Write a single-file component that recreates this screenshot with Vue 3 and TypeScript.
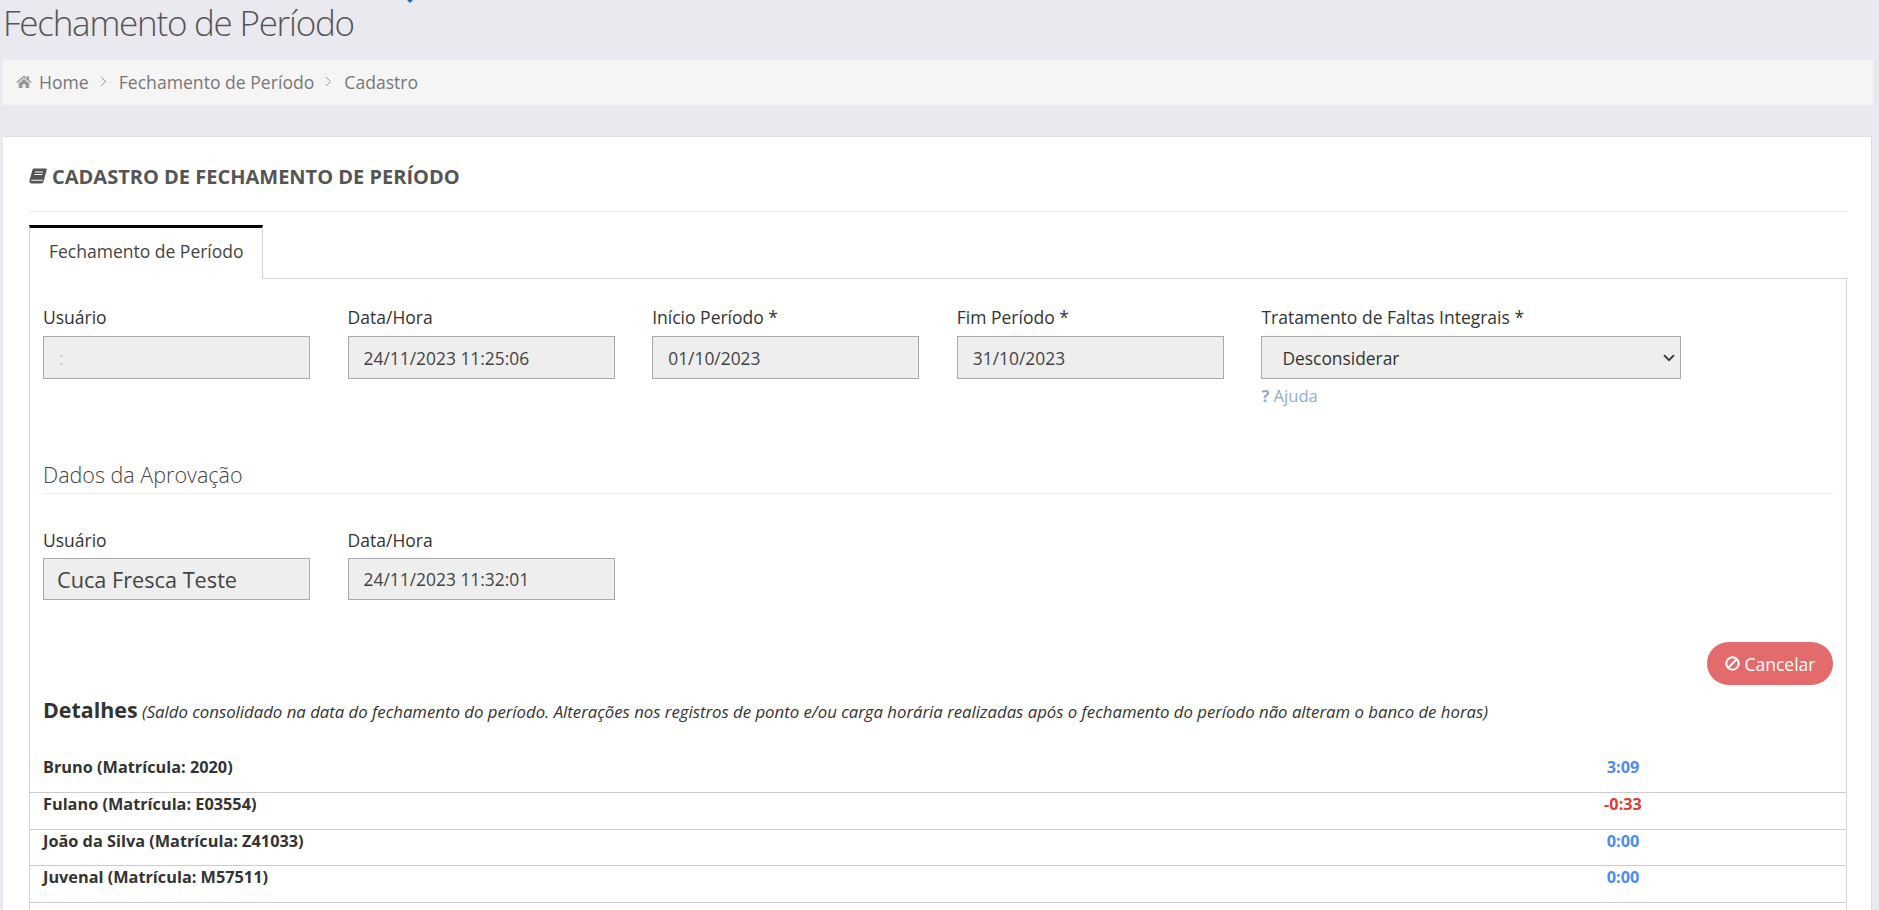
<script setup lang="ts">
interface Row { name: string; value: string; negative?: boolean }
const rows: Row[] = [
  { name: 'Bruno (Matrícula: 2020)', value: '3:09' },
  { name: 'Fulano (Matrícula: E03554)', value: '-0:33', negative: true },
  { name: 'João da Silva (Matrícula: Z41033)', value: '0:00' },
  { name: 'Juvenal (Matrícula: M57511)', value: '0:00' },
]
</script>

<template>
  <div class="page">
    <svg class="tip" width="10" height="3" viewBox="0 0 10 3"><path d="M2 0h6L5 3z" fill="#1f6fa8" /></svg>
    <h1 class="title">Fechamento de Período</h1>
    <nav class="crumbs">
      <svg class="home" width="16" height="13" viewBox="0 0 16 13"><path d="M8 .6.300 7l.9 1L8 2.400 14.800 8l.9-1-2.700-2.300V1.200h-1.900v1.900zM2.700 8.200V13h3.800V9.300h3V13h3.800V8.200L8 3.800z" fill="#999" /></svg>
      <span>Home</span>
      <svg class="sep" width="7" height="11" viewBox="0 0 7 11"><path d="m1 1 4.500 4.500L1 10" fill="none" stroke="#999" stroke-width="1" /></svg>
      <span>Fechamento de Período</span>
      <svg class="sep" width="7" height="11" viewBox="0 0 7 11"><path d="m1 1 4.500 4.500L1 10" fill="none" stroke="#999" stroke-width="1" /></svg>
      <span>Cadastro</span>
    </nav>
    <main class="panel">
      <header class="heading">
        <svg width="18" height="16" viewBox="0 0 18 16"><path d="M5 .5h11.800c.7 0 1.100.5.900 1.200l-2.900 11c-.3 1.500-1.300 2.800-3 2.800H3C1.200 15.500 0 14.200.500 12.200L3.500 1.800C3.700 1 4.200.5 5 .5z" fill="#555" /><path d="M2.300 12.300h11.500M6 4h8M5.400 6.500h8" stroke="#fff" stroke-width="1.100" /></svg>
        <h2>CADASTRO DE FECHAMENTO DE PERÍODO</h2>
      </header>
      <div class="tabs"><div class="tab">Fechamento de Período</div></div>
      <section class="pane">
        <div class="fields">
          <div class="field"><label>Usuário</label><div class="input"><span class="ghost">:</span></div></div>
          <div class="field"><label>Data/Hora</label><div class="input">24/11/2023 11:25:06</div></div>
          <div class="field"><label>Início Período *</label><div class="input">01/10/2023</div></div>
          <div class="field"><label>Fim Período *</label><div class="input">31/10/2023</div></div>
          <div class="field wide">
            <label>Tratamento de Faltas Integrais *</label>
            <div class="input select">
              <span>Desconsiderar</span>
              <svg width="12" height="8" viewBox="0 0 12 8"><path d="m1 1.200 5 5 5-5" fill="none" stroke="#333" stroke-width="1.800" /></svg>
            </div>
            <a class="help"><b>?</b> Ajuda</a>
          </div>
        </div>
        <h3 class="subhead">Dados da Aprovação</h3>
        <div class="fields second">
          <div class="field"><label>Usuário</label><div class="input short big">Cuca Fresca Teste</div></div>
          <div class="field"><label>Data/Hora</label><div class="input short">24/11/2023 11:32:01</div></div>
        </div>
        <div class="actions">
          <button class="cancel" type="button">
            <svg width="15" height="15" viewBox="0 0 15 15"><circle cx="7.500" cy="7.500" r="6.200" fill="none" stroke="#fff" stroke-width="2" /><path d="m3.300 11.700 8.400-8.400" stroke="#fff" stroke-width="2" /></svg>
            Cancelar
          </button>
        </div>
        <p class="details"><strong>Detalhes</strong> <em>(Saldo consolidado na data do fechamento do período. Alterações nos registros de ponto e/ou carga horária realizadas após o fechamento do período não alteram o banco de horas)</em></p>
        <div class="rows">
          <div v-for="row in rows" :key="row.name" class="row">
            <span class="name">{{ row.name }}</span>
            <span class="value" :class="{ negative: row.negative }">{{ row.value }}</span>
          </div>
        </div>
      </section>
    </main>
  </div>
</template>

<style>
html, body { margin: 0; height: 910px; overflow: hidden; background: #e9e9ef; }
</style>

<style scoped>
.page {
  position: relative;
  height: 910px;
  overflow: hidden;
  background: #e9e9ef;
  font-family: "Open Sans", "Noto Sans", sans-serif;
  color: #333;
  padding-left: 3px;
  box-sizing: border-box;
}
.tip { position: absolute; left: 405px; top: 0; }
.title {
  margin: 0;
  height: 60px;
  line-height: 46px;
  font-size: 35px;
  font-weight: 300;
  color: #555;
  letter-spacing: -1.25px;
  white-space: nowrap;
}
.crumbs {
  width: 1870px;
  height: 45px;
  background: #f5f5f5;
  display: flex;
  align-items: center;
  padding: 0 0 2px 13px;
  box-sizing: border-box;
  font-size: 17.600px;
  color: #777;
}
.home { margin-right: 7px; }
.sep { margin: 0 12px 0 11px; }
.panel {
  margin-top: 31px;
  width: 1869px;
  height: 780px;
  background: #fff;
  border-top: 1px solid #e0e0e4;
  border-right: 1px solid #dcdce0;
  box-sizing: border-box;
  padding: 0 24px 0 26px;
}
.heading {
  height: 75px;
  padding-top: 4px;
  box-sizing: border-box;
  display: flex;
  align-items: center;
  gap: 5px;
  border-bottom: 1px solid #eee;
  color: #555;
}
.heading h2 { margin: 0; font-size: 20px; font-weight: 700; color: #555; }
.tabs { margin-top: 13px; height: 54px; border-bottom: 1px solid #d4d4d4; box-sizing: border-box; }
.tab {
  width: 234px;
  height: 54px;
  box-sizing: border-box;
  border-top: 3px solid #000;
  border-left: 1px solid #d4d4d4;
  border-right: 1px solid #d4d4d4;
  background: #fff;
  font-size: 17.500px;
  color: #444;
  line-height: 47px;
  padding-left: 19px;
}
.pane {
  box-sizing: border-box;
  height: 640px;
  border-left: 1px solid #d4d4d4;
  border-right: 1px solid #d4d4d4;
  padding: 0 13px;
}
.fields { display: flex; gap: 37.600px; padding-top: 25px; height: 155px; box-sizing: border-box; }
.field { width: 267px; display: flex; flex-direction: column; }
.field.wide { width: 419.500px; }
.field label { font-size: 17.500px; line-height: 26px; height: 32px; color: #333; }
.second label.second-label { line-height: 28px; }
.input {
  height: 43px;
  flex: none;
  box-sizing: border-box;
  background: #eee;
  border: 1px solid #aaa;
  font-size: 17.400px;
  color: #444;
  display: flex;
  align-items: center;
  padding-left: 15px;
}
.input.short { height: 42px; }
.input.big { font-size: 21.700px; padding-left: 13px; }
.ghost { color: #ccc; }
.select { justify-content: space-between; padding: 0 5px 0 20px; color: #333; }
.help { margin-top: 6px; font-size: 16.600px; line-height: 22px; color: #8fadcc; }
.subhead {
  margin: 15px 0 0;
  height: 45px;
  font-size: 21.500px;
  line-height: 52px;
  font-weight: 300;
  color: #444;
  border-bottom: 1px solid #eee;
  box-sizing: border-box;
}
.second { padding-top: 32px; height: 148px; }
.second .field label { line-height: 28px; }
.actions { display: flex; justify-content: flex-end; }
.cancel {
  width: 126px;
  height: 43px;
  border: 0;
  border-radius: 22px;
  background: #e36b6b;
  color: #fff;
  font: 17.500px "Open Sans", sans-serif;
  display: flex;
  align-items: center;
  justify-content: center;
  gap: 5px;
}
.details { margin: 8px 0 0; font-size: 16.750px; line-height: 34px; white-space: nowrap; color: #333; }
.details strong { font-size: 21.400px; font-weight: 700; }
.rows { margin: 27.300px -13px 0; }
.row {
  height: 36.670px;
  border-bottom: 1px solid #ccc;
  box-sizing: border-box;
  display: flex;
  padding-left: 13px;
  line-height: 23px;
  font-size: 16.300px;
  font-weight: 700;
}
.name { flex: 1; color: #333; }
.value { width: 60px; margin-right: 193px; text-align: center; color: #4a8df0; }
.negative { color: #d9402f; }
</style>
